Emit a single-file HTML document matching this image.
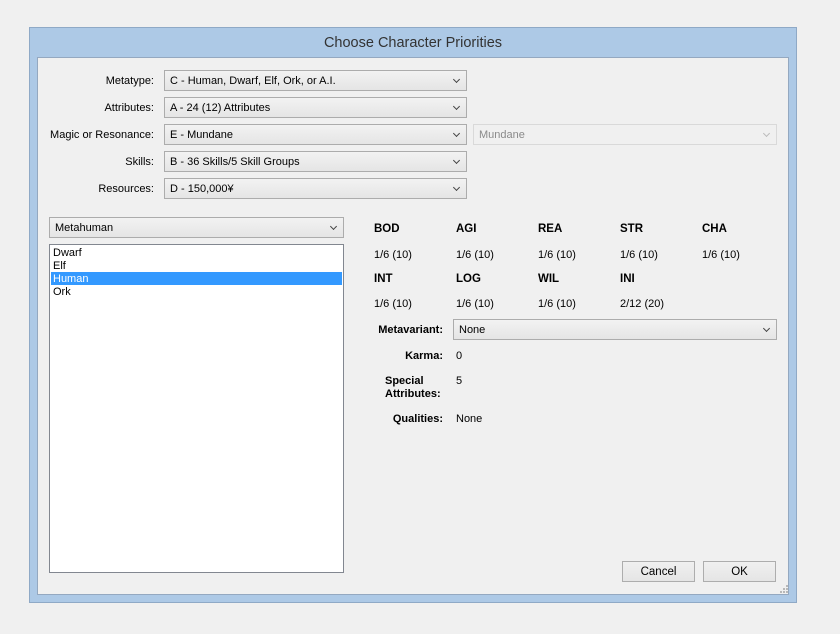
<!DOCTYPE html>
<html><head><style>
body{margin:0;width:840px;height:634px;background:#f0f0f0;position:relative;font-family:"Liberation Sans",sans-serif;font-size:11px;color:#000;overflow:hidden}
.a{position:absolute}
.win{left:29px;top:27px;width:766px;height:574px;background:#adc9e6;border:1px solid #8fa9c6}
.client{left:37px;top:57px;width:752px;height:538px;background:#f0f0f0;border:1px solid #94a8c0;box-sizing:border-box}
.title{left:29px;top:35px;width:768px;text-align:center;font-size:14.5px;color:#333}
.cb{position:absolute;height:21px;box-sizing:border-box;border:1px solid #acacac;background:linear-gradient(#f2f2f2,#e5e5e5);padding:4px 0 0 5px;font-size:11px;white-space:nowrap}
.cb:after{content:"";position:absolute;right:7px;top:6px;width:4px;height:4px;border-right:1.6px solid #444;border-bottom:1.6px solid #444;transform:rotate(45deg)}
.dis{background:#f0f0f0;border-color:#d9d9d9;color:#8a8a8a}
.dis:after{border-color:#bbb}
.lbl{position:absolute;text-align:right;width:150px;font-size:11px}
.h{position:absolute;font-weight:bold;font-size:11.5px}
.v{position:absolute;font-size:11px}
.b{position:absolute;font-weight:bold;text-align:right;width:90px;font-size:11px}
.btn{position:absolute;height:21px;width:73px;box-sizing:border-box;border:1px solid #adadad;background:linear-gradient(#f0f0f0,#e5e5e5);text-align:center;padding-top:4px;font-size:11.5px}
</style></head><body>
<div class="a win"></div>
<div class="a client"></div>
<div class="a title">Choose Character Priorities</div>

<div class="lbl" style="left:4px;top:75px">Metatype:</div>
<div class="lbl" style="left:4px;top:102px">Attributes:</div>
<div class="lbl" style="left:4px;top:129px">Magic or Resonance:</div>
<div class="lbl" style="left:4px;top:156px">Skills:</div>
<div class="lbl" style="left:4px;top:183px">Resources:</div>
<div class="cb" style="left:164px;top:70px;width:303px">C - Human, Dwarf, Elf, Ork, or A.I.</div>
<div class="cb" style="left:164px;top:97px;width:303px">A - 24 (12) Attributes</div>
<div class="cb" style="left:164px;top:124px;width:303px">E - Mundane</div>
<div class="cb" style="left:164px;top:151px;width:303px">B - 36 Skills/5 Skill Groups</div>
<div class="cb" style="left:164px;top:178px;width:303px">D - 150,000¥</div>
<div class="cb dis" style="left:473px;top:124px;width:304px">Mundane</div>

<div class="cb" style="left:49px;top:217px;width:295px">Metahuman</div>
<div class="a" style="left:49px;top:244px;width:295px;height:329px;background:#fff;border:1px solid #828790;box-sizing:border-box"></div>
<div class="v" style="left:53px;top:247px">Dwarf</div>
<div class="v" style="left:53px;top:260px">Elf</div>
<div class="a" style="left:51px;top:272px;width:291px;height:13px;background:#3399ff"></div>
<div class="v" style="left:53px;top:273px;color:#fff">Human</div>
<div class="v" style="left:53px;top:286px">Ork</div>

<div class="h" style="left:374px;top:223px">BOD</div>
<div class="h" style="left:456px;top:223px">AGI</div>
<div class="h" style="left:538px;top:223px">REA</div>
<div class="h" style="left:620px;top:223px">STR</div>
<div class="h" style="left:702px;top:223px">CHA</div>
<div class="v" style="left:374px;top:249px">1/6 (10)</div>
<div class="v" style="left:456px;top:249px">1/6 (10)</div>
<div class="v" style="left:538px;top:249px">1/6 (10)</div>
<div class="v" style="left:620px;top:249px">1/6 (10)</div>
<div class="v" style="left:702px;top:249px">1/6 (10)</div>
<div class="h" style="left:374px;top:273px">INT</div>
<div class="h" style="left:456px;top:273px">LOG</div>
<div class="h" style="left:538px;top:273px">WIL</div>
<div class="h" style="left:620px;top:273px">INI</div>
<div class="v" style="left:374px;top:298px">1/6 (10)</div>
<div class="v" style="left:456px;top:298px">1/6 (10)</div>
<div class="v" style="left:538px;top:298px">1/6 (10)</div>
<div class="v" style="left:620px;top:298px">2/12 (20)</div>

<div class="b" style="left:353px;top:324px">Metavariant:</div>
<div class="cb" style="left:453px;top:319px;width:324px">None</div>
<div class="b" style="left:353px;top:350px">Karma:</div>
<div class="v" style="left:456px;top:350px">0</div>
<div class="a" style="left:385px;top:375px;font-weight:bold;line-height:13px">Special<br>Attributes:</div>
<div class="v" style="left:456px;top:375px">5</div>
<div class="b" style="left:353px;top:413px">Qualities:</div>
<div class="v" style="left:456px;top:413px">None</div>

<div class="btn" style="left:622px;top:561px">Cancel</div>
<div class="btn" style="left:703px;top:561px">OK</div>
<svg class="a" style="left:779px;top:584px" width="10" height="10"><g fill="#b8b8b8"><rect x="7" y="1" width="2" height="2"/><rect x="4" y="4" width="2" height="2"/><rect x="7" y="4" width="2" height="2"/><rect x="1" y="7" width="2" height="2"/><rect x="4" y="7" width="2" height="2"/><rect x="7" y="7" width="2" height="2"/></g></svg>
</body></html>
